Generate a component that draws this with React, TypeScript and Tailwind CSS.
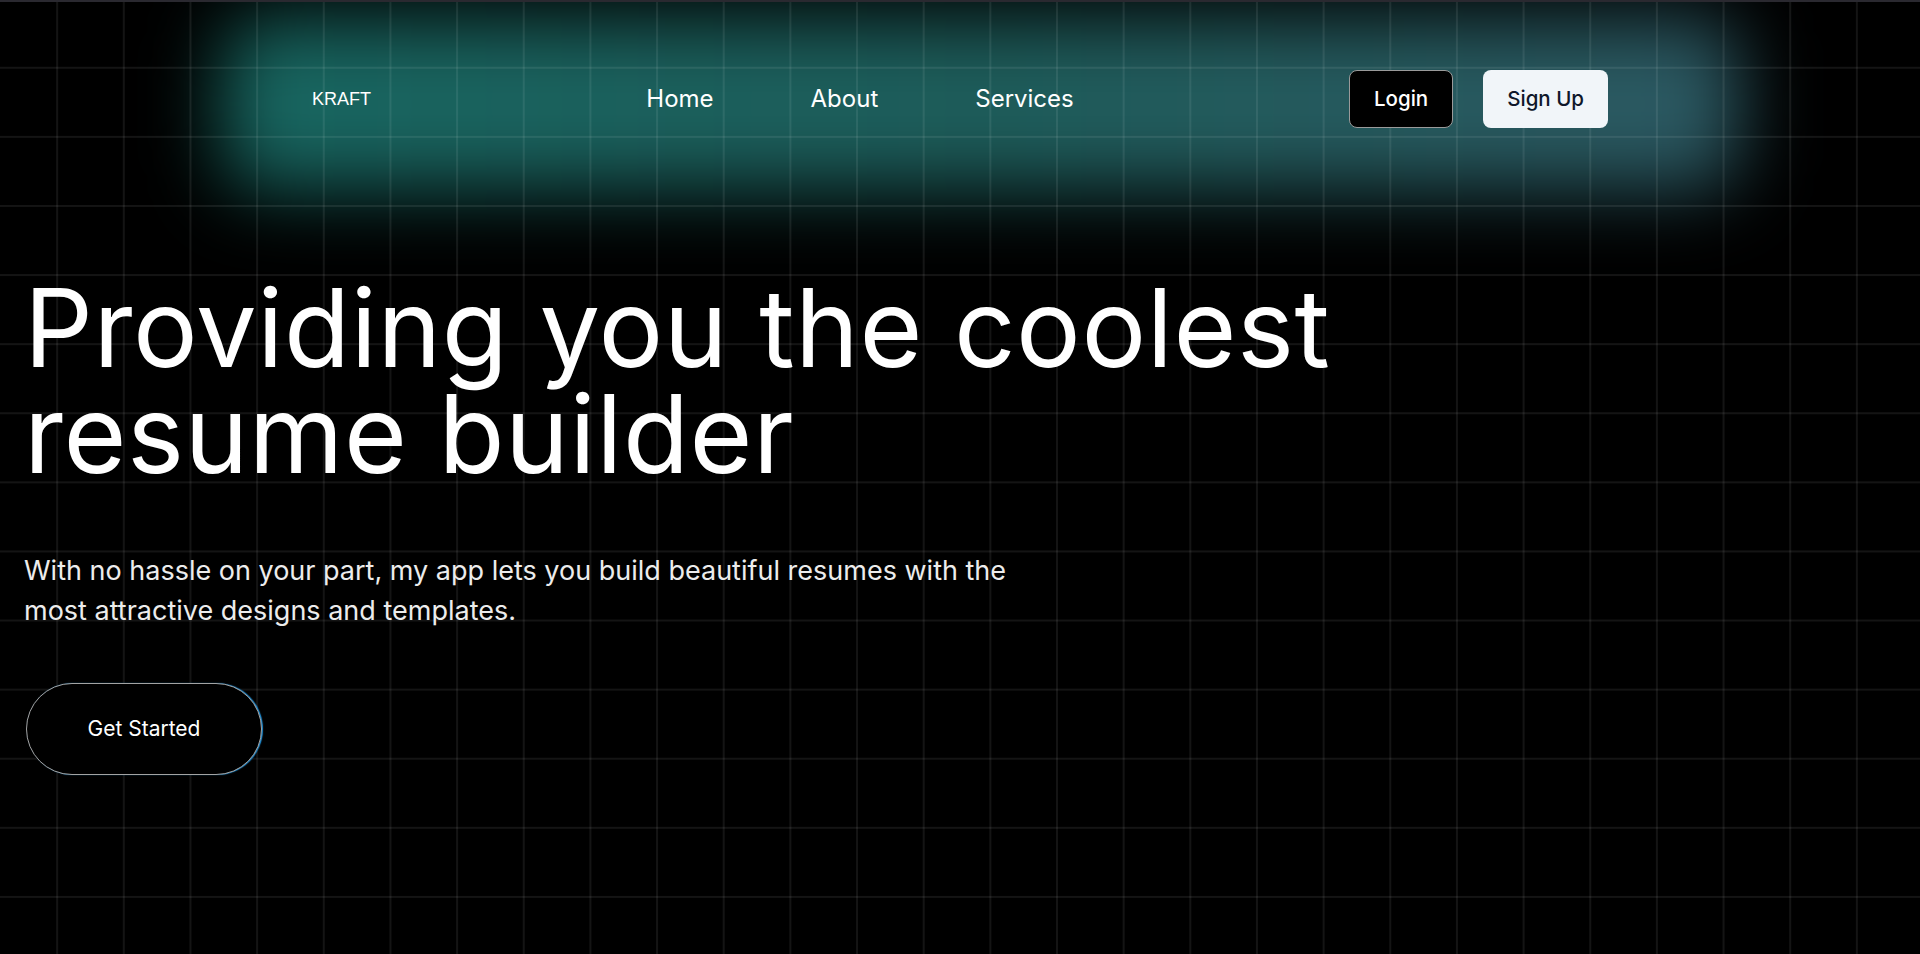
import React from "react";

export default function App() {
  return (
    <div
      className="relative min-h-screen w-full overflow-hidden bg-black text-white"
      style={{ fontFamily: "Inter, 'Noto Sans', sans-serif" }}
    >
      {/* glow behind nav */}
      <div className="pointer-events-none absolute left-[222px] top-[18px] h-[172px] w-[1518px] rounded-[40px] bg-gradient-to-r from-[#176660] via-[#1d5c5a] to-[#2c5862] blur-[38px]" />
      {/* grid overlay */}
      <div
        className="pointer-events-none absolute inset-0 bg-[linear-gradient(to_right,rgba(255,255,255,0.08)_2px,transparent_2px),linear-gradient(to_bottom,rgba(255,255,255,0.08)_2px,transparent_2px)] bg-[length:66.67px_69.1px] bg-[position:-10.5px_-2.3px]"
      />
      <div className="pointer-events-none absolute left-0 right-0 top-0 h-[2px] bg-[#2a2930]" />

      <div className="relative">
        <nav className="flex h-[198px] items-center justify-between px-[312px]">
          <div
            className="text-[18px] text-white"
            style={{ fontFamily: "'Liberation Sans', Arial, sans-serif" }}
          >
            KRAFT
          </div>
          <ul className="flex items-center gap-[97px] text-[24px] text-white">
            <li>Home</li>
            <li>About</li>
            <li>Services</li>
          </ul>
          <div className="flex items-center gap-[30px]">
            <button className="h-[58px] rounded-lg border border-[#9a9a9a] bg-black px-6 text-[20.5px] font-medium text-white">
              Login
            </button>
            <button className="h-[58px] rounded-lg bg-[#f1f5f9] px-6 text-[20.5px] font-medium text-[#0f172a]">
              Sign Up
            </button>
          </div>
        </nav>

        <section className="px-6 pt-[77px]">
          <h1 className="max-w-[1400px] text-[108px] font-normal leading-[106px] tracking-[0.005em] text-white">
            Providing you the coolest resume builder
          </h1>
          <p className="mt-[64px] max-w-[1030px] text-[27px] leading-[40px] text-[#ececec]">
            With no hassle on your part, my app lets you build beautiful resumes with the most attractive designs and templates.
          </p>
          <button className="ml-[2px] mt-[52px] flex h-[92px] w-[236px] items-center justify-center rounded-full border border-[#a3a3a3] bg-black text-[21px] text-white shadow-[1px_0_1px_#1d8fd8]">
            Get Started
          </button>
        </section>
      </div>
    </div>
  );
}
